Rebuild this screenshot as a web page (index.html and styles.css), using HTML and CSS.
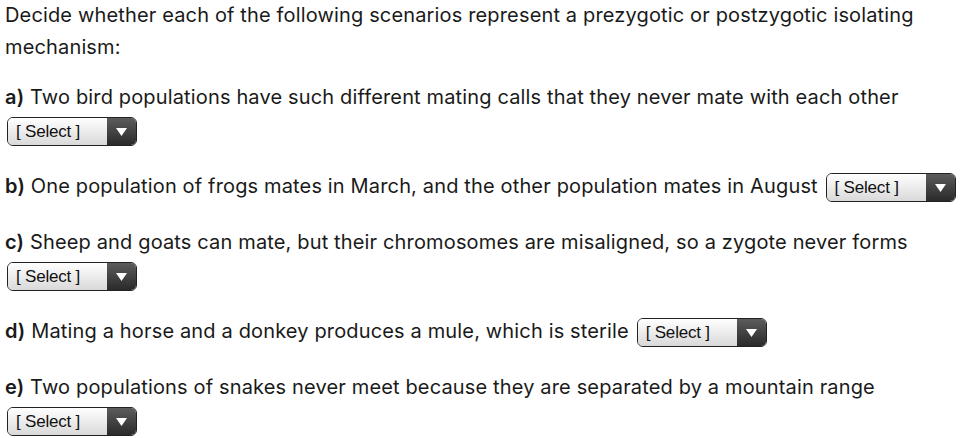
FILE: index.html
```html
<!DOCTYPE html>
<html lang="en">
<head>
  <meta charset="UTF-8" />
  <title>Isolating mechanisms</title>
  <link rel="stylesheet" href="styles.css">
</head>
<body>
  <div class="question">
    <p class="intro">Decide whether each of the following scenarios represent a prezygotic or postzygotic isolating mechanism:</p>

    <p><strong>a)</strong> Two bird populations have such different mating calls that they never mate with each other
      <span class="pick"><span class="pick-label">[ Select ]</span><span class="pick-arrow"><svg width="11" height="8" viewBox="0 0 11 8"><polygon points="0,0 11,0 5.5,8" fill="#fff"/></svg></span></span></p>

    <p><strong>b)</strong> One population of frogs mates in March, and the other population mates in August
      <span class="pick"><span class="pick-label">[ Select ]</span><span class="pick-arrow"><svg width="11" height="8" viewBox="0 0 11 8"><polygon points="0,0 11,0 5.5,8" fill="#fff"/></svg></span></span></p>

    <p><strong>c)</strong> Sheep and goats can mate, but their chromosomes are misaligned, so a zygote never forms
      <span class="pick"><span class="pick-label">[ Select ]</span><span class="pick-arrow"><svg width="11" height="8" viewBox="0 0 11 8"><polygon points="0,0 11,0 5.5,8" fill="#fff"/></svg></span></span></p>

    <p><strong>d)</strong> Mating a horse and a donkey produces a mule, which is sterile
      <span class="pick"><span class="pick-label">[ Select ]</span><span class="pick-arrow"><svg width="11" height="8" viewBox="0 0 11 8"><polygon points="0,0 11,0 5.5,8" fill="#fff"/></svg></span></span></p>

    <p><strong>e)</strong> Two populations of snakes never meet because they are separated by a mountain range
      <span class="pick"><span class="pick-label">[ Select ]</span><span class="pick-arrow"><svg width="11" height="8" viewBox="0 0 11 8"><polygon points="0,0 11,0 5.5,8" fill="#fff"/></svg></span></span></p>
  </div>
</body>
</html>
```

FILE: styles.css
```css
body { margin: 0; padding: 0 5px; background: #fff; color: #1a1a1a; font-family: Inter, "Liberation Sans", Arial, sans-serif; font-size: 20px; letter-spacing: 0.15px; }
.question { margin-top: -1px; }
.question p { margin: 0 0 23px; line-height: 33px; }
.question p.intro { margin-bottom: 18px; line-height: 32px; }
.question p:last-child { margin-bottom: 0; }
strong { font-weight: 600; }

/* dropdown look-alike */
.pick { display: inline-flex; vertical-align: middle; margin-left: 2px; width: 130px; height: 29px; box-sizing: border-box;
  border: 1px solid #222; border-radius: 6px; overflow: hidden; font-family: "Liberation Sans", Arial, sans-serif; font-size: 17px; letter-spacing: -0.2px; line-height: 27px; }
.pick-label { flex: 1; padding-left: 8px; background: linear-gradient(#ffffff, #d9d9d9); color: #111; }
.pick-arrow { width: 29px; display: flex; align-items: center; justify-content: center; background: linear-gradient(#5c5c5c, #2a2a2a); }
```
